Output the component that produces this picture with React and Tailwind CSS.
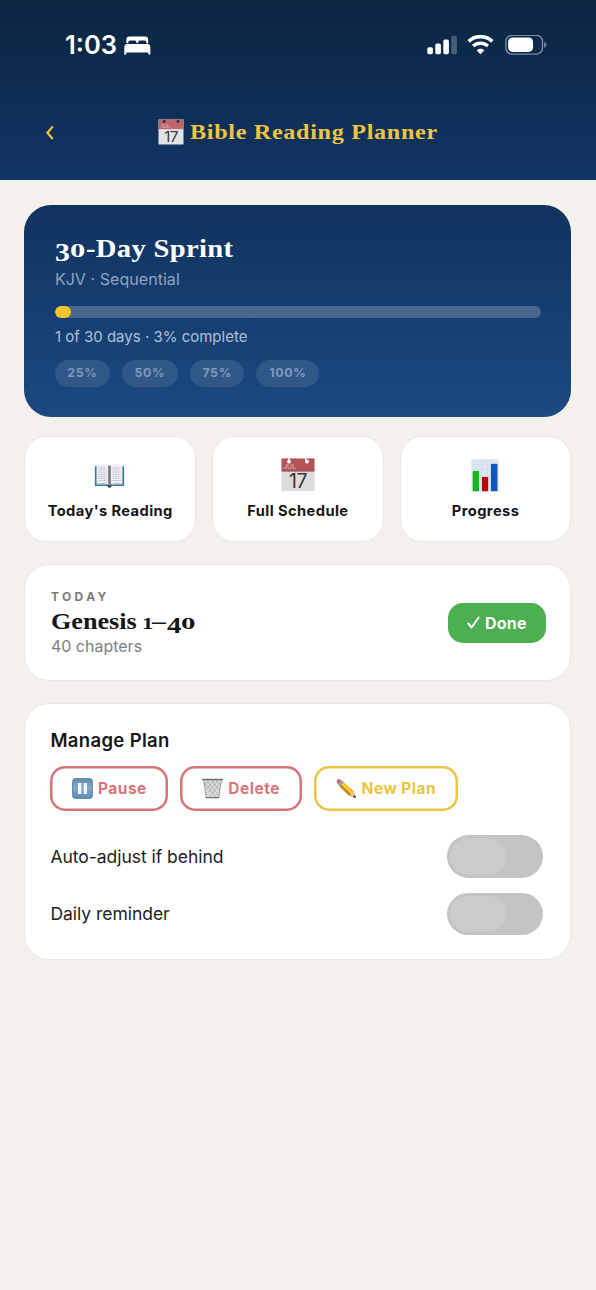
import React from "react";

function Calendar({ className }) {
  return (
    <svg viewBox="0 0 34 34" className={className} aria-hidden="true">
      <rect x="0.5" y="0.5" width="33" height="32.5" fill="#dcdcde" />
      <rect x="0.5" y="0.5" width="33" height="12.8" fill="#b4545a" />
      <rect x="0.5" y="12.6" width="33" height="0.8" fill="#a04a50" />
      <circle cx="8" cy="3.6" r="1.9" fill="#fff" />
      <circle cx="26" cy="3.6" r="1.9" fill="#fff" />
      <path d="M8 3.6V0.5M26 3.6L24.5 0.8" stroke="#fff" strokeWidth="1.4" strokeLinecap="round" />
      <text x="2.2" y="11.4" fontSize="6.8" fontFamily="Inter, sans-serif" fill="#e9c0c2">JUL</text>
      <text x="17" y="30" fontSize="19.5" letterSpacing="-0.6" textAnchor="middle" fontFamily="Inter, sans-serif" fill="#37373a">17</text>
    </svg>
  );
}

function HeaderCalendar({ className }) {
  return (
    <svg viewBox="0 0 26 26" className={className} aria-hidden="true">
      <rect x="0.5" y="0.5" width="25" height="25" fill="#e2e3e6" />
      <rect x="0.5" y="0.5" width="25" height="9.6" fill="#c0676c" />
      <circle cx="6.2" cy="2.4" r="1.4" fill="#1a2c4c" />
      <circle cx="20" cy="2.4" r="1.4" fill="#1a2c4c" />
      <text x="2" y="8.9" fontSize="5.2" fontFamily="Inter, sans-serif" fill="#e3b4b6">JUL</text>
      <text x="13.2" y="22.6" fontSize="15" letterSpacing="-0.4" textAnchor="middle" fontFamily="Inter, sans-serif" fill="#37373a">17</text>
    </svg>
  );
}

function Book({ className }) {
  return (
    <svg viewBox="0 0 32 26" className={className} aria-hidden="true">
      <path d="M0.8 3.5H31.2V24H18.5L16 25.5L13.5 24H0.8Z" fill="#33799a" />
      <path d="M2.3 21.5C7 20.5 12 20.8 15.5 23.3H16.5C20 20.8 25 20.5 29.7 21.5V22.7H2.3Z" fill="#b9c6cf" />
      <path d="M2.5 2.3C7 1 12.5 1 15.8 3V23C12 20.7 7 20.6 2.5 21.5Z" fill="#eeecf2" />
      <path d="M29.5 2.3C25 1 19.5 1 16.2 3V23C20 20.7 25 20.6 29.5 21.5Z" fill="#f1eff5" />
      <path d="M14.6 2.6H17.4V23.6H14.6Z" fill="#777983" />
      <path d="M4.5 5H12.8M4.5 7.2H12M4.5 9.4H12.8M4.5 11.6H12.5M4.5 13.8H12.8M4.5 16H12.2M4.5 18.2H12.8M19.2 5H27.5M19.2 7.2H26.5M19.2 9.4H27.5M19.2 11.6H27M19.2 13.8H27.5M19.2 16H26.8M19.2 18.2H27.5" stroke="#bdbbc8" strokeWidth="0.9" strokeDasharray="2 0.5" />
      <path d="M13.7 23.3H18.3L17.5 25.5H14.5Z" fill="#31444e" />
    </svg>
  );
}

function Chart({ className }) {
  return (
    <svg viewBox="0 0 28 33" className={className} aria-hidden="true">
      <rect x="0.3" y="0.3" width="27.4" height="32.4" fill="#dde6f0" />
      <path d="M0 5.5H28M0 11H28M0 16.5H28M0 22H28M5.5 0V33M11 0V33M16.5 0V33M22 0V33" stroke="#cfdbe8" strokeWidth="0.5" />
      <rect x="1.2" y="11.5" width="7.4" height="21.2" fill="#16b425" stroke="#f5f8fa" strokeWidth="0.7" />
      <rect x="10.5" y="17.5" width="7.2" height="15.2" fill="#b9090d" stroke="#f5f8fa" strokeWidth="0.7" />
      <rect x="19.5" y="4.3" width="7.4" height="28.4" fill="#1057bd" stroke="#f5f8fa" strokeWidth="0.7" />
    </svg>
  );
}

function PauseIcon() {
  return (
    <svg viewBox="0 0 21 21" className="h-[21px] w-[21px]" aria-hidden="true">
      <defs>
        <linearGradient id="pauseFill" x1="0" y1="0" x2="0" y2="1">
          <stop offset="0" stopColor="#668bb0" />
          <stop offset="0.5" stopColor="#7fa6cb" />
          <stop offset="1" stopColor="#6089b2" />
        </linearGradient>
      </defs>
      <rect x="0.5" y="0.5" width="20" height="20" rx="3" fill="url(#pauseFill)" stroke="#587a9c" strokeWidth="0.8" />
      <rect x="6" y="5" width="3.4" height="11" fill="#f4f8fb" />
      <rect x="11.6" y="5" width="3.4" height="11" fill="#f4f8fb" />
    </svg>
  );
}

function TrashIcon() {
  return (
    <svg viewBox="0 0 21 21" className="h-[21px] w-[21px]" aria-hidden="true">
      <path d="M1.5 1.8H19.5L16.8 20H4.2Z" fill="#d9dadb" />
      <path d="M2 4L14 19.5M4.5 2L17 18M9 2L18 13M14 2L19 8M19 4L7 19.5M16.5 2L4 17M12 2L3 13M7 2L2 8" stroke="#96999b" strokeWidth="0.6" fill="none" />
      <path d="M1.5 2L4.2 19.5M19.5 2L16.8 19.5" stroke="#8d9092" strokeWidth="0.8" />
      <path d="M0.8 1.5H20.2" stroke="#6d6f71" strokeWidth="1.6" strokeLinecap="round" />
      <path d="M4.2 19.7H16.8" stroke="#6d6f71" strokeWidth="1.3" strokeLinecap="round" />
    </svg>
  );
}

function PencilIcon() {
  return (
    <svg viewBox="0 0 21 21" className="h-[21px] w-[21px]" aria-hidden="true">
      <path d="M6.7 3.2L17.8 13.3L19.8 19.7L13.2 17.8L2.8 7.5Z" fill="#f3b51f" />
      <path d="M5.6 5L15.6 14.7" stroke="#ffd759" strokeWidth="1.5" />
      <path d="M3.5 8.2L13.2 17.8L14.8 16.3L4.8 6.7Z" fill="#c98216" />
      <path d="M17.8 13.3L19.8 19.7L13.2 17.8L14.8 16.2L15.7 14.6Z" fill="#e9c391" />
      <path d="M18.9 17L20.2 20.2L16.9 19Z" fill="#2e3033" />
      <path d="M4.4 1.8L7.5 4L3.5 8.3L1.3 5.4Z" fill="#8ba3b0" />
      <path d="M0.8 3.8C0.5 1.6 2.6 0.3 4.7 1.7L5.5 2.4L2 6L1.5 5.4Z" fill="#df6474" />
    </svg>
  );
}

function StatusBar() {
  return (
    <div className="flex h-[90px] items-center justify-between pl-[65px] pr-[49px] text-white">
      <div className="flex items-center">
        <span className="w-[52px] whitespace-nowrap text-[25.5px] font-semibold leading-[30px]">1:03</span>
        <svg viewBox="0 0 27 19" className="ml-[6.5px] h-[19px] w-[27px]" fill="currentColor" aria-hidden="true">
          <path d="M2.4 7.2V3.6Q2.4 0.6 5.4 0.6H21.2Q24.2 0.6 24.2 3.6V7.2H22.3V6Q22.3 4.4 20.6 4.4H15.8Q14.2 4.4 14.2 6V7H12.4V6Q12.4 4.4 10.8 4.4H6Q4.3 4.4 4.3 6V7.2Z" />
          <path d="M0.3 18.5V11.3Q0.3 8 3.3 8H23.3Q26.3 8 26.3 11.3V18.5H24.3V16.4H2.3V18.5Z" />
        </svg>
      </div>
      <div className="flex items-center">
        <svg viewBox="0 0 31 20" className="h-5 w-[31px]" fill="currentColor" aria-hidden="true">
          <rect x="1.3" y="12.2" width="5.6" height="7" rx="1.6" />
          <rect x="9.3" y="8.6" width="5.6" height="10.6" rx="1.6" />
          <rect x="17.3" y="4.5" width="5.6" height="14.7" rx="1.6" />
          <rect x="25.3" y="0.7" width="5.6" height="18.5" rx="1.6" opacity="0.25" />
        </svg>
        <svg viewBox="0 0 27 20" className="ml-[10px] h-5 w-[27px]" fill="none" stroke="currentColor" aria-hidden="true">
          <path d="M1.7 6.4C8.2 0.1 18.8 0.1 25.3 6.4" strokeWidth="3.6" />
          <path d="M6.1 11.1C10.3 7.2 16.7 7.2 20.9 11.1" strokeWidth="3.4" />
          <path d="M13.5 19.3L9.6 15.3C11.8 13.1 15.2 13.1 17.4 15.3Z" fill="currentColor" stroke="none" />
        </svg>
        <svg viewBox="0 0 42 21" className="ml-[11px] h-[21px] w-[42px]" aria-hidden="true">
          <rect x="0.9" y="0.3" width="36.6" height="18.8" rx="6.2" fill="none" stroke="#7b8ca2" strokeWidth="1.4" />
          <rect x="3.1" y="2.5" width="25" height="14.4" rx="4.4" fill="#fff" />
          <path d="M39.2 6.7Q41.4 7.7 41.4 9.8Q41.4 11.9 39.2 12.9Z" fill="#7b8ca2" />
        </svg>
      </div>
    </div>
  );
}

function Header() {
  return (
    <header className="h-[180px] bg-linear-to-b from-[#0a2540] to-[#113565]">
      <StatusBar />
      <div className="flex h-[84px] items-center pl-[44px] text-[#eec53f]">
        <svg viewBox="0 0 12 16" className="h-4 w-3" fill="none" stroke="currentColor" strokeWidth="2.2" aria-hidden="true">
          <path d="M8.8 2.4L3.4 8.7L8.8 15" />
        </svg>
        <HeaderCalendar className="ml-[102px] h-[26px] w-[26px]" />
        <h1 className="ml-[6px] origin-left scale-x-110 whitespace-nowrap font-['Liberation_Serif',serif] text-[22px] font-bold leading-7 tracking-[0.6px]">Bible Reading Planner</h1>
      </div>
    </header>
  );
}

const milestones = [
  { label: "25%", width: "w-[55px]" },
  { label: "50%", width: "w-[56px]" },
  { label: "75%", width: "w-[54.5px]" },
  { label: "100%", width: "w-[63px]" },
];

function PlanCard() {
  return (
    <section className="h-[212px] rounded-[27px] bg-linear-to-b from-[#11335f] to-[#1a4a82] pl-[30.5px] pr-[30px] pt-[28px]">
      <h2 className="flex h-8 items-baseline whitespace-nowrap font-['Liberation_Serif',serif] text-[26px] font-bold leading-8 text-white">
        <span className="relative top-[4px] w-[15px] origin-left scale-x-[1.2] text-[25px]">3</span>
        <span className="w-[16px] origin-left scale-x-[1.65] text-[18.5px]">0</span>
        <span className="origin-left scale-x-110 tracking-[0.3px]">-Day Sprint</span>
      </h2>
      <p className="mt-[4px] whitespace-nowrap text-[16px] leading-5 tracking-[0.05px] text-[#8fa4c0]">KJV · Sequential</p>
      <div className="mt-[17px] h-3 overflow-hidden rounded-full bg-[#47678f]">
        <div className="h-3 w-4 rounded-full bg-[#f3c431]" />
      </div>
      <p className="mt-[9px] whitespace-nowrap text-[15px] leading-5 text-[#afc0d6]">1 of 30 days · 3% complete</p>
      <div className="mt-[13px] flex gap-[12px]">
        {milestones.map((m) => (
          <span key={m.label} className={`${m.width} flex h-[27px] items-center justify-center rounded-full bg-[#2f5889] text-[12.3px] font-bold tracking-[0.7px] text-[#8198b7]`}>{m.label}</span>
        ))}
      </div>
    </section>
  );
}

const CARD = "border border-[#ebe7e2] bg-white";

function ActionCard({ icon, label }) {
  return (
    <button className={`${CARD} flex h-[106.5px] flex-1 flex-col items-center rounded-[22px] pt-[20.5px]`}>
      <span className="flex h-[36px] items-center justify-center pr-px">{icon}</span>
      <span className="mt-[7.5px] whitespace-nowrap text-[14.7px] font-bold leading-5 tracking-[0.4px] text-[#161616]">{label}</span>
    </button>
  );
}

function TodayCard() {
  return (
    <section className={`${CARD} mt-[21.5px] flex h-[117px] items-center justify-between rounded-[25px] pl-[25.5px] pr-[24.5px]`}>
      <div className="pt-px">
        <p className="whitespace-nowrap text-[12px] font-bold leading-4 tracking-[3.4px] text-[#7c7c7c]">TODAY</p>
        <h3 className="flex h-8 items-baseline whitespace-nowrap font-['Liberation_Serif',serif] text-[24px] font-bold leading-8 text-[#151515]">
          <span className="w-[91px] origin-left scale-x-[1.09]">Genesis&nbsp;</span>
          <span className="w-[10.5px] origin-left scale-x-[1.3] text-[17.5px]">1</span>
          <span className="w-[14.5px] origin-left scale-x-[1.15]">–</span>
          <span className="relative top-[4px] w-[14px] origin-left scale-x-[1.25] text-[23px]">4</span>
          <span className="w-[15px] origin-left scale-x-[1.65] text-[17.5px]">0</span>
        </h3>
        <p className="-mt-px whitespace-nowrap text-[16px] leading-5 text-[#808080]">40 chapters</p>
      </div>
      <button className="mt-[1.5px] flex h-10 w-[98px] items-center justify-center gap-[5px] rounded-[15px] bg-[#4caf50] text-white">
        <svg viewBox="0 0 13 13" className="h-[13px] w-[13px]" fill="none" stroke="currentColor" strokeWidth="2" strokeLinecap="round" strokeLinejoin="round" aria-hidden="true">
          <path d="M1.3 7.5L4.6 11.5L11.6 1.5" />
        </svg>
        <span className="text-[16px] font-bold leading-5 tracking-[0.2px]">Done</span>
      </button>
    </section>
  );
}

function PlanButton({ icon, label, className }) {
  return (
    <button className={`${className} flex h-[45px] items-center justify-center gap-[5px] rounded-[15px]`}>
      {icon}
      <span className="whitespace-nowrap pt-px text-[15.5px] font-bold leading-5 tracking-[0.5px]">{label}</span>
    </button>
  );
}

function ToggleRow({ label }) {
  return (
    <div className="flex h-[57.5px] items-center justify-between pr-[3px]">
      <span className="whitespace-nowrap pt-px text-[17.5px] leading-6 tracking-[-0.03px] text-[#222]">{label}</span>
      <button role="switch" aria-checked="false" aria-label={label} className="h-[42.5px] w-[96px] rounded-full bg-[#c4c4c7] p-[3px]">
        <span className="block h-[36.5px] w-[56px] rounded-full bg-[#cbcbcb]" />
      </button>
    </div>
  );
}

function ManageCard() {
  return (
    <section className={`${CARD} mt-[22px] h-[257px] rounded-[25px] pl-[25px] pr-[24.5px] pt-[24px]`}>
      <h3 className="text-[18.5px] font-semibold leading-6 tracking-[0.35px] text-[#161616]">Manage Plan</h3>
      <div className="mt-[14.5px] flex gap-[12px]">
        <PlanButton icon={<PauseIcon />} label="Pause" className="w-[118px] text-[#d9757a] shadow-[inset_0_0_0_2.5px_#d9757a]" />
        <PlanButton icon={<TrashIcon />} label="Delete" className="w-[121.5px] text-[#d9757a] shadow-[inset_0_0_0_2.5px_#d9757a]" />
        <PlanButton icon={<PencilIcon />} label="New Plan" className="w-[144px] text-[#ebc544] shadow-[inset_0_0_0_2.5px_#ebc544]" />
      </div>
      <div className="mt-[16.5px]">
        <ToggleRow label="Auto-adjust if behind" />
        <ToggleRow label="Daily reminder" />
      </div>
    </section>
  );
}

export default function App() {
  return (
    <div className="min-h-[1290px] w-[596px] overflow-hidden bg-[#f4f1ec] font-['Inter',sans-serif]">
      <Header />
      <main className="pl-[24.4px] pr-[24.6px] pt-[25px]">
        <PlanCard />
        <div className="mt-[18.5px] flex gap-[16px]">
          <ActionCard icon={<Book className="h-[25px] w-[31px]" />} label="Today's Reading" />
          <ActionCard icon={<Calendar className="ml-px h-[34px] w-[34px]" />} label="Full Schedule" />
          <ActionCard icon={<Chart className="h-[33px] w-[28px]" />} label="Progress" />
        </div>
        <TodayCard />
        <ManageCard />
      </main>
    </div>
  );
}
